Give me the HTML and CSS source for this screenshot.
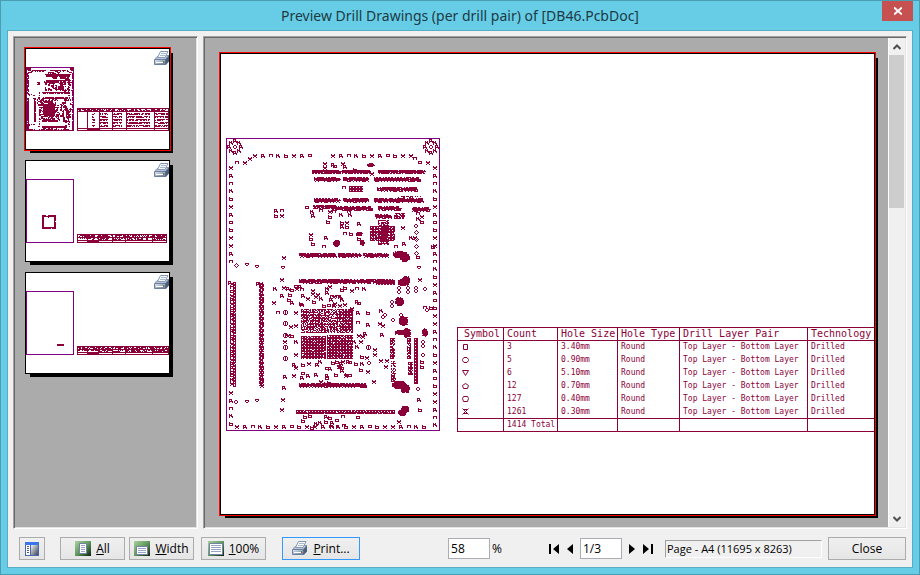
FILE: index.html
```html
<!DOCTYPE html>
<html lang="en">
<head>
<meta charset="utf-8">
<title>Preview Drill Drawings</title>
<link rel="stylesheet" href="styles.css">
</head>
<body>
<svg class="defs" aria-hidden="true">
  <defs>
    <linearGradient id="metal" x1="0" y1="0" x2="1" y2="1"><stop offset="0" stop-color="#e8eef6"/><stop offset="1" stop-color="#5d7190"/></linearGradient>
    <linearGradient id="green" x1="0" y1="0" x2="1" y2="1"><stop offset="0" stop-color="#a9d39b"/><stop offset=".5" stop-color="#5f9a5c"/><stop offset="1" stop-color="#0c220f"/></linearGradient>
    <linearGradient id="steel" x1="0" y1="0" x2="1" y2="1"><stop offset="0" stop-color="#f2f3f6"/><stop offset="1" stop-color="#3c4656"/></linearGradient>
    <symbol id="printer" viewBox="0 0 16 15">
      <path d="M1 7l4-3h10v6l-3 4H1z" fill="#8496b0"/>
      <path d="M0.500 8.500h11v5h-11z" fill="url(#metal)" stroke="#6b7e9b"/>
      <path d="M11.500 8.500l3.500-4v6l-3.500 3.500z" fill="#4d617f"/>
      <path d="M1 8l4-3h9l-3 3z" fill="#b8c6d8"/>
      <path d="M3.500 6.500l3-6h7.500l-3 6z" fill="#f6f9fc" stroke="#8698b5"/>
      <path d="M7 2.500h5M6 4.500h5" stroke="#a9bace"/>
      <path d="M2 11.500h7" stroke="#fff"/>
      <path d="M9 10h1v1h-1z" fill="#2c9b48"/><path d="M9 11h1v1h-1z" fill="#d34a36"/>
    </symbol>
  </defs>
</svg>
<div class="window">
  <header class="titlebar">
    <h1>Preview Drill Drawings (per drill pair) of [DB46.PcbDoc]</h1>
    <button class="close-x" type="button" aria-label="Close window"><svg width="8" height="8" viewBox="0 0 8 8"><path d="M0 .5l8 7M8 .5l-8 7" stroke="#fff" stroke-width="2"/></svg></button>
  </header>
  <main class="client">
    <div class="panes">
      <nav class="pane thumbs" aria-label="Pages">
        <a class="thumb selected" href="#p1" aria-label="Page 1">
          <svg class="mini" viewBox="0 0 143 100"><path class="outline" d="M.5 18.500h47v63h-47z"/><path class="ink" id="mini1"/></svg>
          <svg class="badge"><use href="#printer"/></svg>
        </a>
        <a class="thumb" href="#p2" aria-label="Page 2">
          <svg class="mini" viewBox="0 0 143 100"><path class="outline" d="M.5 18.500h47v63h-47z"/><path class="ink" d="M16 54h4v1h2v-1h8v6h-1v1h1v7h-4v-1h-1v1h-9zM18 56v10h10v-10h-5v1h-1v-1z" fill-rule="evenodd"/><path class="ink" id="mini2"/></svg>
          <svg class="badge"><use href="#printer"/></svg>
        </a>
        <a class="thumb" href="#p3" aria-label="Page 3">
          <svg class="mini" viewBox="0 0 143 100"><path class="outline" d="M.5 18.500h47v63h-47z"/><path class="ink" d="M31 71h7v2h-7z"/><path class="ink" id="mini3"/></svg>
          <svg class="badge"><use href="#printer"/></svg>
        </a>
      </nav>
      <section class="pane viewer" aria-label="Page preview">
        <div class="scroller">
          <div class="sheet">
            <svg class="board" viewBox="0 0 214 293" role="img" aria-label="Drill drawing"><path class="outline" d="M.5 .5h213v292h-213z"/><path class="ink" id="drills"/></svg>
            <table class="drill-table">
              <thead><tr><th class="c1">Symbol</th><th class="c2">Count</th><th class="c3">Hole Size</th><th class="c4">Hole Type</th><th class="c5">Drill Layer Pair</th><th class="c6">Technology</th></tr></thead>
              <tbody>
                <tr><td><svg class="sym" viewBox="0 0 7 7"><path d="M1.500 .5h4v5h-4z"/></svg></td><td>3</td><td>3.40mm</td><td>Round</td><td>Top Layer - Bottom Layer</td><td>Drilled</td></tr>
                <tr><td><svg class="sym" viewBox="0 0 7 7"><path d="M2 .5h3l1.500 2v1l-1.500 2h-3l-1.500-2v-1z"/></svg></td><td>5</td><td>0.90mm</td><td>Round</td><td>Top Layer - Bottom Layer</td><td>Drilled</td></tr>
                <tr><td><svg class="sym" viewBox="0 0 7 7"><path d="M.5 .5h6l-3 5z"/></svg></td><td>6</td><td>5.10mm</td><td>Round</td><td>Top Layer - Bottom Layer</td><td>Drilled</td></tr>
                <tr><td><svg class="sym" viewBox="0 0 7 7"><path d="M3.500 .5l3 2-1 3h-4l-1-3z"/></svg></td><td>12</td><td>0.70mm</td><td>Round</td><td>Top Layer - Bottom Layer</td><td>Drilled</td></tr>
                <tr><td><svg class="sym" viewBox="0 0 7 7"><path d="M1.500 .5h4l1 2-1 3h-4l-1-3z"/></svg></td><td>127</td><td>0.40mm</td><td>Round</td><td>Top Layer - Bottom Layer</td><td>Drilled</td></tr>
                <tr><td><svg class="sym" viewBox="0 0 7 7"><path d="M.5 .5l6 6M6.500 .5l-6 6M2 1.500h3M2 5.500h3"/></svg></td><td>1261</td><td>0.30mm</td><td>Round</td><td>Top Layer - Bottom Layer</td><td>Drilled</td></tr>
              </tbody>
              <tfoot><tr><td></td><td>1414 Total</td><td></td><td></td><td></td><td></td></tr></tfoot>
            </table>
          </div>
        </div>
        <div class="scrollbar">
          <button type="button" aria-label="Scroll up"><svg width="8" height="6" viewBox="0 0 8 6"><path d="M.5 5l3.500-3.500 3.500 3.500"/></svg></button>
          <div class="grip"></div>
          <button type="button" aria-label="Scroll down"><svg width="8" height="6" viewBox="0 0 8 6"><path d="M.5 1l3.500 3.500 3.500-3.500"/></svg></button>
        </div>
      </section>
    </div>
    <footer class="toolbar">
      <button class="btn toggle" type="button" aria-label="Toggle thumbnails"><svg width="14" height="14" viewBox="0 0 14 14"><path d="M0 0h14v14H0z" fill="#4668ad"/><path d="M0 0h14v3H0z" fill="#3c74ee"/><path d="M1 3h4v10H1z" fill="#fff"/><path d="M2 4.500h2M2 6.500h2M2 8.500h2M2 10.500h2" stroke="#4a5c80"/><path d="M6 3h7v10H6z" fill="url(#steel)"/></svg></button>
      <div class="fit">
        <button class="btn wide" type="button"><svg width="16" height="15" viewBox="0 0 16 15"><path d="M0 0h16v15H0z" fill="url(#green)"/><path d="M4.500 2.500h7v10h-7z" fill="#fff" stroke="#7480a6"/><path d="M6 4.500h4M6 6.500h4M6 8.500h4M6 10.500h4" stroke="#96a4c6"/></svg><span><u>A</u>ll</span></button>
        <button class="btn wide" type="button"><svg width="16" height="15" viewBox="0 0 16 15"><path d="M0 0h16v15H0z" fill="url(#green)"/><path d="M2.500 5.500h11v8h-11z" fill="#fff" stroke="#7480a6"/><path d="M4 7.500h8M4 9.500h8M4 11.500h8" stroke="#96a4c6"/></svg><span><u>W</u>idth</span></button>
      </div>
      <button class="btn wide full" type="button"><svg width="16" height="15" viewBox="0 0 16 15"><path d="M0 0h16v15H0z" fill="url(#green)"/><path d="M1.500 2.500h13v11h-13z" fill="#fff" stroke="#7480a6"/><path d="M3 4.500h10M3 6.500h10M3 8.500h10M3 10.500h10" stroke="#96a4c6"/></svg><span><u>1</u>00%</span></button>
      <button class="btn print" type="button"><svg width="16" height="15"><use href="#printer"/></svg><span><u>P</u>rint...</span></button>
      <label class="zoom"><input type="text" value="58" aria-label="Zoom"><span>%</span></label>
      <div class="pager">
        <button type="button" aria-label="First page"><svg width="11" height="10" viewBox="0 0 11 10"><path d="M0 0h2v10H0zM10 0v10L4 5z"/></svg></button>
        <button type="button" aria-label="Previous page"><svg width="6" height="10" viewBox="0 0 6 10"><path d="M6 0v10L0 5z"/></svg></button>
        <input type="text" value="1/3" aria-label="Page number">
        <button type="button" aria-label="Next page"><svg width="6" height="10" viewBox="0 0 6 10"><path d="M0 0v10l6-5z"/></svg></button>
        <button type="button" aria-label="Last page"><svg width="11" height="10" viewBox="0 0 11 10"><path d="M9 0h2v10H9zM1 0v10l6-5z"/></svg></button>
      </div>
      <output class="status">Page - A4 (11695 x 8263)</output>
      <button class="btn dismiss" type="button">Close</button>
    </footer>
  </main>
</div>
<script src="board.js"></script>
</body>
</html>
```
FILE: board.js
```js
// Drill symbols as small bitmaps; the board is a set of inked pixels.
const GLYPHS = {
  H: ['x..x', 'xxxx', '.xx.', 'x..x'],
  n: ['xxxx', 'x..x', 'x..x'],
  b: ['x...', 'xxxx', 'x..x', 'xxxx'],
  a: ['xxxx', 'x..x', 'xxxx'],
  r: ['xxx.', 'x.x.', 'xxxx', 'x..x'],
  h: ['x.x.', 'xxx.', 'x.xx', 'x..x'],
  o: ['.xx.', 'x..x', 'x..x', '.xx.'],
  v: ['xxxx', 'x..x', '.xx.'],
  d: ['..x..', '.x.x.', 'x...x', '.x.x.', '..x..'],
  O: ['.xxx.', 'x.x.x', 'x.x.x', 'x.x.x', '.xxx.']
};
const CYCLE = 'HrnhbHrabH';
const ink = new Set();
let seed = 7;
const rnd = () => (seed = (seed * 16807) % 2147483647) / 2147483647;
const dot = (x, y) => ink.add(Math.round(x) + ',' + Math.round(y));
const pick = () => CYCLE[Math.floor(rnd() * CYCLE.length)];

// Draws one symbol centred at x, y.
function glyph(x, y, kind) {
  const rows = GLYPHS[kind];
  rows.forEach((row, j) => [...row].forEach((c, i) => {
    if (c === 'x') dot(Math.round(x) - 2 + i, Math.round(y) - 2 + j);
  }));
}
function line(x0, y0, dx, dy, count) {
  for (let i = 0; i < count; i++) glyph(x0 + i * dx, y0 + i * dy, CYCLE[i % CYCLE.length]);
}
// Closely packed row of pins.
function strip(x0, x1, y0, y1) {
  for (let x = x0 + 2; x <= x1 - 1; x += 3) {
    glyph(x, y0 + 2, pick());
    glyph(x + 1, y1, pick());
    if (rnd() > 0.3) for (let y = y0; y <= y1; y++) dot(x, y);
  }
  for (let x = x0; x <= x1; x++) if (rnd() > 0.08) dot(x, Math.round((y0 + y1) / 2));
}
// Regular lattice of overlapping pins.
function mesh(x0, x1, y0, y1, fill) {
  for (let y = y0; y <= y1; y++) for (let x = x0; x <= x1; x++) {
    const hole = (x - x0) % 3 === 1 && (y - y0) % 3 === 1;
    if (!hole && rnd() < fill) dot(x, y);
  }
}
// Overlapping large pads with a ragged rim.
function blob(x0, x1, y0, y1) {
  const cx = (x0 + x1) / 2, cy = (y0 + y1) / 2, rx = (x1 - x0) / 2 + 0.5, ry = (y1 - y0) / 2 + 0.5;
  for (let y = y0; y <= y1; y++) for (let x = x0; x <= x1; x++)
    if (((x - cx) / rx) ** 2 + ((y - cy) / ry) ** 2 < 0.75 + rnd() * 0.6) dot(x, y);
}
function each(kind, points) {
  points.forEach(([x, y]) => glyph(x, y, kind || pick()));
}

// Mounting holes and the stitching round the edge
[9, 205].forEach(cx => {
  for (let k = 0; k < 8; k++) glyph(cx + 6 * Math.cos(k * Math.PI / 4), 9 + 6 * Math.sin(k * Math.PI / 4), k % 2 ? 'h' : 'r');
  glyph(cx, 9, 'o');
});
line(29, 18, 7.8, 0, 8);
line(107, 18, 7.8, 0, 11);
each('', [[24, 21], [19, 25], [11, 25], [189, 21], [194, 25], [202, 25]]);
line(5, 30, 0, 7.8, 13);
line(5, 255, 0, 7.8, 5);
line(209, 30, 0, 7.8, 34);
line(11, 289, 7.8, 0, 25);

// Edge connectors
mesh(7, 9, 144, 248, 0.97);
for (let y = 146; y < 248; y += 4) { glyph(6, y, pick()); glyph(35, y, 'H'); glyph(36, y + 2, pick()); }
mesh(164, 168, 200, 220, 0.85); mesh(165, 169, 223, 243, 0.75);
mesh(181, 184, 200, 220, 0.85); mesh(182, 186, 224, 236, 0.85);
mesh(188, 191, 200, 245, 1);

// Pin rows
strip(86, 115, 32, 34); strip(116, 144, 32, 34); strip(152, 199, 32, 34);
strip(88, 114, 39, 42); strip(117, 142, 39, 42); strip(148, 195, 39, 42);
mesh(123, 136, 48, 53, 1); glyph(118, 50, 'n'); strip(151, 190, 49, 52);
strip(88, 114, 60, 63); strip(117, 142, 60, 63); strip(148, 196, 60, 63); mesh(172, 194, 58, 61, 0.6);
strip(87, 110, 67, 69); strip(106, 147, 68, 71); strip(152, 175, 68, 71); strip(187, 204, 69, 72);
strip(73, 109, 115, 118); strip(112, 135, 115, 118); strip(137, 161, 115, 118);
strip(73, 110, 141, 144); strip(104, 168, 141, 144); mesh(150, 168, 142, 146, 1);
strip(73, 140, 245, 248);
mesh(70, 168, 272, 275, 0.95);

// Processor and memory
mesh(75, 98, 171, 194, 0.78); mesh(99, 113, 171, 194, 0.72); mesh(114, 126, 171, 194, 0.93);
mesh(75, 99, 198, 220, 0.95); mesh(101, 126, 197, 220, 0.95);
mesh(144, 168, 88, 102, 0.92); mesh(152, 162, 82, 106, 0.8);
mesh(168, 178, 75, 80, 0.85); strip(149, 165, 76, 79);

// Large pads
blob(141, 148, 25, 28); blob(167, 181, 113, 119); blob(174, 183, 115, 123);
blob(175, 183, 138, 147); blob(172, 179, 141, 147); blob(169, 177, 159, 167); blob(173, 181, 178, 187);
blob(177, 184, 190, 199); blob(170, 178, 192, 196); blob(196, 201, 190, 198); blob(166, 180, 243, 250);
blob(175, 183, 246, 254); blob(175, 182, 268, 274); blob(172, 179, 272, 277); blob(107, 113, 102, 108);
blob(134, 138, 102, 107); blob(130, 136, 94, 97);

// Vias
each('', [[99, 26], [99, 30], [107, 27], [109, 29], [117, 26], [119, 29], [129, 32], [146, 36], [81, 70],
  [50, 73], [50, 78], [56, 73], [56, 78], [86, 74], [87, 78], [95, 73], [104, 74], [104, 79], [108, 74],
  [115, 77], [123, 73], [124, 77], [102, 84], [116, 85], [121, 85], [116, 89], [121, 89], [133, 86],
  [85, 97], [85, 101], [100, 100], [119, 96], [125, 96], [133, 101], [87, 106], [98, 109], [170, 109],
  [178, 106], [185, 100], [189, 100], [177, 90], [188, 72], [192, 76], [196, 79], [192, 81], [196, 84],
  [207, 109], [58, 120], [192, 120], [32, 146], [4, 145], [56, 142], [194, 142]]);
each('', [[49, 151], [48, 165], [52, 175], [56, 158], [58, 150], [62, 151], [66, 152], [70, 149], [64, 157],
  [63, 162], [66, 165], [71, 151], [74, 149], [76, 152], [77, 158], [87, 153], [87, 156], [101, 151],
  [101, 155], [104, 149], [116, 152], [119, 150], [126, 153], [131, 151], [138, 151], [88, 164], [95, 161],
  [108, 159], [131, 164], [133, 166], [98, 168], [103, 168], [108, 168], [114, 168], [119, 167], [126, 171],
  [70, 175], [76, 168], [65, 189], [70, 188], [62, 198], [66, 198], [59, 204], [70, 204], [70, 217],
  [132, 175], [142, 175], [132, 185], [142, 187], [139, 196], [133, 198], [128, 204], [135, 204], [137, 199],
  [131, 209], [136, 219], [141, 220], [149, 212], [149, 217], [155, 173], [154, 186], [157, 188], [156, 197]]);
each('', [[68, 227], [70, 230], [77, 227], [83, 226], [91, 227], [82, 238], [90, 237], [101, 231], [101, 238],
  [101, 241], [107, 225], [111, 224], [115, 226], [116, 230], [110, 237], [121, 237], [124, 238], [124, 224],
  [130, 226], [136, 226], [135, 232], [142, 234], [68, 238], [59, 239], [76, 240], [77, 236], [148, 244],
  [58, 250], [155, 223], [161, 223], [160, 229], [196, 224], [196, 229], [95, 244], [103, 245], [100, 246],
  [57, 262], [193, 262], [56, 272], [194, 272], [173, 284], [132, 280], [79, 279], [84, 278], [77, 283],
  [90, 286], [94, 285], [100, 279], [104, 280], [100, 284], [106, 285], [111, 283], [106, 290], [112, 289],
  [118, 288], [117, 279], [171, 195], [175, 195], [199, 170], [205, 170], [86, 290]]);
for (let i = 0; i < 10; i++) glyph(62 + rnd() * 60, 150 + rnd() * 18, pick());
for (let i = 0; i < 8; i++) glyph(76 + rnd() * 50, 223 + rnd() * 18, pick());
each('O', [[59, 174], [59, 185], [59, 197], [59, 209], [59, 220], [142, 209]]);
each('d', [[190, 94], [190, 101], [190, 108], [190, 115], [10, 127]]);
each('o', [[190, 88], [173, 150], [173, 154], [182, 150], [182, 154], [190, 150], [190, 153], [199, 151],
  [166, 164], [166, 168], [167, 182], [175, 177], [159, 177], [157, 179], [201, 172], [197, 204], [197, 208],
  [197, 217], [10, 264], [143, 225], [192, 251]]);
each('v', [[21, 127], [31, 129], [57, 130], [193, 130], [21, 264], [31, 263]]);

const toPath = set => [...set].map(p => 'M' + p.replace(',', ' ') + 'h1v1h-1z').join('');
document.getElementById('drills').setAttribute('d', toPath(ink));

// Thumbnail of the board: the same pixels on a coarser grid.
const small = new Set();
ink.forEach(p => {
  const [x, y] = p.split(',').map(Number);
  if (rnd() > 0.5) small.add(Math.floor(1 + x * 0.219) + ',' + Math.floor(18 + y * 0.219));
});

// Thumbnail of the drill table: rules, a dense header and lines of text.
function miniTable(set, x1, top, bottom, columns) {
  for (let x = 51; x < x1; x++) {
    [top, top + 3, bottom - 3, bottom - 1].forEach(y => set.add(x + ',' + y));
    for (let y = top + 1; y < top + 3; y++) if (rnd() > 0.35) set.add(x + ',' + y);
    for (let y = top + 5; y < bottom - 3; y += 3)
      if (!columns.some(c => x > c - 5 && x <= c) && x > 65) {
        if (rnd() > 0.2) set.add(x + ',' + y);
        if (rnd() > 0.4) set.add(x + ',' + (y + 1));
      }
  }
  for (let x = 62; x < 73; x++) set.add(x + ',' + (bottom - 2));
  [51, ...columns, x1 - 1].forEach(x => { for (let y = top; y < bottom; y++) set.add(x + ',' + y); });
}
miniTable(small, 143, 59, 82, [61, 73, 86, 100, 128]);
document.getElementById('mini1').setAttribute('d', toPath(small));
[['mini2', 141], ['mini3', 143]].forEach(([id, right]) => {
  const set = new Set();
  miniTable(set, right, 73, 82, [61, 72, 86, 99, 126]);
  for (let x = 52; x < right; x++) if (rnd() > 0.35) set.add(x + ',77');
  document.getElementById(id).setAttribute('d', toPath(set));
});
```
FILE: styles.css
```css
* { box-sizing: border-box; }
body { margin: 0; font: 12px/16px "Open Sans", "Noto Sans", sans-serif; color: #000; }
button, input { font: inherit; color: inherit; }
svg { display: block; flex: none; }
.defs { width: 0; height: 0; position: absolute; }

.window { min-height: 100vh; display: flex; flex-direction: column; padding: 0 6px 6px; background: #67cde7; border: 1px solid #4b9db4; }
.titlebar { height: 29px; display: flex; justify-content: center; align-items: center; position: relative; }
.titlebar h1 { margin: 0; font: 400 14px/20px "Noto Sans", "Open Sans", sans-serif; color: #1c3a44; }
.close-x { position: absolute; right: 0; top: 0; width: 31px; height: 20px; padding: 0; border: 0; background: #c75050; display: flex; align-items: center; justify-content: center; }
.client { flex: 1; display: flex; flex-direction: column; background: #f0f0f0; border: 1px solid #58adc4; padding: 5px 5px 7px; }

.panes { flex: 1; display: flex; gap: 5px; min-height: 0; }
.pane { background: #ababab; border: 1px solid; border-color: #a0a0a0 #fff #fff #a0a0a0; box-shadow: inset 1px 1px #696969, inset -1px -1px #e3e3e3; }
.thumbs { width: 185px; padding: 11px; display: flex; flex-direction: column; gap: 10px; }
.thumb { position: relative; width: 145px; background: #fff; border: 1px solid #000; box-shadow: 4px 4px 0 -1px #000; }
.thumb.selected { outline: 1px solid #f00; }
.mini { width: 100%; height: auto; }
.badge { position: absolute; top: 2px; right: -1px; width: 16px; height: 15px; }
.outline { fill: none; stroke: #800080; shape-rendering: crispEdges; }
.ink { fill: #8b0038; shape-rendering: crispEdges; }

.viewer { flex: 1; min-width: 0; display: flex; padding: 1px; }
.scroller { flex: 1; min-width: 0; display: flex; padding: 15px 13px 12px 15px; }
.sheet { flex: 1; min-width: 0; display: flex; align-items: flex-start; gap: 17px; padding: 84px 0 0 5px; overflow: hidden; background: #fff; border: 1px solid #000; outline: 1px solid #f00; box-shadow: 4px 4px 0 -1px #000; }
.board { width: 214px; height: 293px; }
.drill-table { flex: none; align-self: flex-start; margin-top: 189px; table-layout: fixed; width: 420px; border-collapse: collapse; border: 1px solid #8b0038; color: #8b0038; font: 8px/12px "DejaVu Sans Mono", monospace; }
.drill-table th { font-size: 10px; font-weight: 400; text-align: left; border-bottom: 1px solid #8b0038; }
.drill-table th, .drill-table td { height: 13px; padding: 0 0 0 3px; border-right: 1px solid #8b0038; white-space: nowrap; overflow: hidden; }
.drill-table tfoot td { border-top: 1px solid #8b0038; }
.drill-table .c1 { width: 46px; padding-left: 6px; }
.c2 { width: 54px; }
.c3 { width: 60px; }
.c4 { width: 62px; }
.c5 { width: 128px; }
.sym { width: 7px; height: 7px; margin-left: 1px; fill: none; stroke: #8b0038; }

.scrollbar { width: 17px; display: flex; flex-direction: column; background: #f0f0f0; border-left: 1px solid #fff; }
.scrollbar button { height: 17px; padding: 0; border: 0; background: none; display: flex; align-items: center; justify-content: center; }
.scrollbar path { fill: none; stroke: #505050; stroke-width: 2; }
.grip { height: 153px; margin: 0 1px auto 0; background: #cdcdcd; }

.toolbar { display: flex; align-items: center; padding: 8px 1px 0 6px; }
.btn { height: 23px; padding: 0; display: flex; align-items: center; justify-content: center; gap: 5px; border: 1px solid #acacac; background: linear-gradient(#f0f0f0, #e5e5e5); }
.toggle { width: 26px; margin-right: 15px; }
.fit { display: flex; gap: 4px; margin-right: 7px; }
.wide { width: 65px; }
.full { margin-right: 16px; }
.print { width: 78px; border-color: #3399ff; }
.zoom { display: flex; align-items: center; gap: 2px; margin-left: auto; }
.toolbar input { width: 42px; height: 21px; padding: 0 2px; border: 1px solid #abadb3; background: #fff; }
.pager { display: flex; align-items: center; gap: 7px; margin: 0 12px 0 47px; }
.pager button { padding: 0; border: 0; background: none; }
.status { width: 157px; height: 18px; line-height: 16px; padding: 0 1px; margin-right: 6px; font-size: 11px; border: 1px solid; border-color: #a0a0a0 #fff #fff #a0a0a0; white-space: nowrap; }
.dismiss { width: 78px; }
```
